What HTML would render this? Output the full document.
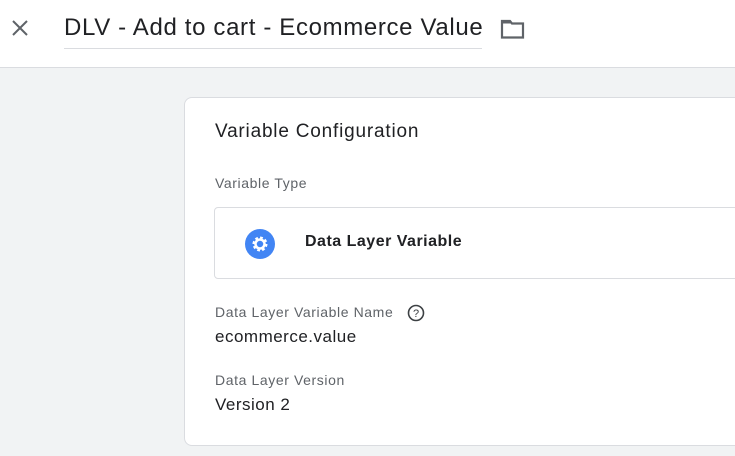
<!DOCTYPE html>
<html><head><style>
body{margin:0;width:735px;height:456px;overflow:hidden;background:#f1f3f4;font-family:"Liberation Sans",sans-serif;position:relative}
.top{position:absolute;left:0;top:0;width:735px;height:67px;background:#fff;border-bottom:1px solid #dadce0}
.title{position:absolute;left:64px;top:14px;font-size:24px;color:#202124;border-bottom:1px solid #dadce0;padding-bottom:6px;width:418px;letter-spacing:0.65px;white-space:nowrap}
.card{position:absolute;left:184px;top:97px;width:600px;height:347px;background:#fff;border:1px solid #dadce0;border-radius:8px}
.t{position:absolute;color:#202124}
.lbl{position:absolute;color:#5f6368;font-size:14px;letter-spacing:0.6px}
.box{position:absolute;left:29px;top:109px;width:600px;height:70px;border:1px solid #dadce0;border-radius:4px}
</style></head><body>
<div class="top">
<svg style="position:absolute;left:11px;top:19px" width="18" height="18" viewBox="0 0 18 18"><path d="M2 2L16 16M16 2L2 16" stroke="#5f6368" stroke-width="2"/></svg>
<div class="title">DLV - Add to cart - Ecommerce Value</div>
<svg style="position:absolute;left:500px;top:18px" width="25" height="22" viewBox="0 0 25 22"><path d="M2 3h8l2 2.5h11v14H2z" fill="none" stroke="#5f6368" stroke-width="2.2"/><path d="M2 3h8l2 2.5H2z" fill="#5f6368"/></svg>
</div>
<div class="card">
<div class="t" style="left:30px;top:23px;font-size:19px;letter-spacing:0.8px">Variable Configuration</div>
<div class="lbl" style="left:30px;top:77px">Variable Type</div>
<div class="box">
<svg style="position:absolute;left:30px;top:21px" width="30" height="30" viewBox="0 0 30 30"><circle cx="15" cy="15" r="15" fill="#4285f4"/><circle cx="15" cy="15" r="5.5" fill="none" stroke="#fff" stroke-width="4" stroke-dasharray="2.4 1.9"/><circle cx="15" cy="15" r="4.5" fill="none" stroke="#fff" stroke-width="2.5"/></svg>
<div class="t" style="left:90px;top:25px;font-size:16px;font-weight:bold;letter-spacing:0.5px">Data Layer Variable</div>
</div>
<div class="lbl" style="left:30px;top:206px">Data Layer Variable Name</div>
<svg style="position:absolute;left:222px;top:206px" width="18" height="18" viewBox="0 0 18 18"><circle cx="9" cy="9" r="7.5" fill="none" stroke="#3c4043" stroke-width="1.6"/><text x="9" y="13" font-size="11" text-anchor="middle" fill="#3c4043" font-family="Liberation Sans">?</text></svg>
<div class="t" style="left:30px;top:229px;font-size:17px;letter-spacing:0.5px">ecommerce.value</div>
<div class="lbl" style="left:30px;top:274px">Data Layer Version</div>
<div class="t" style="left:30px;top:297px;font-size:17px;letter-spacing:0.5px">Version 2</div>
</div>
</body></html>
